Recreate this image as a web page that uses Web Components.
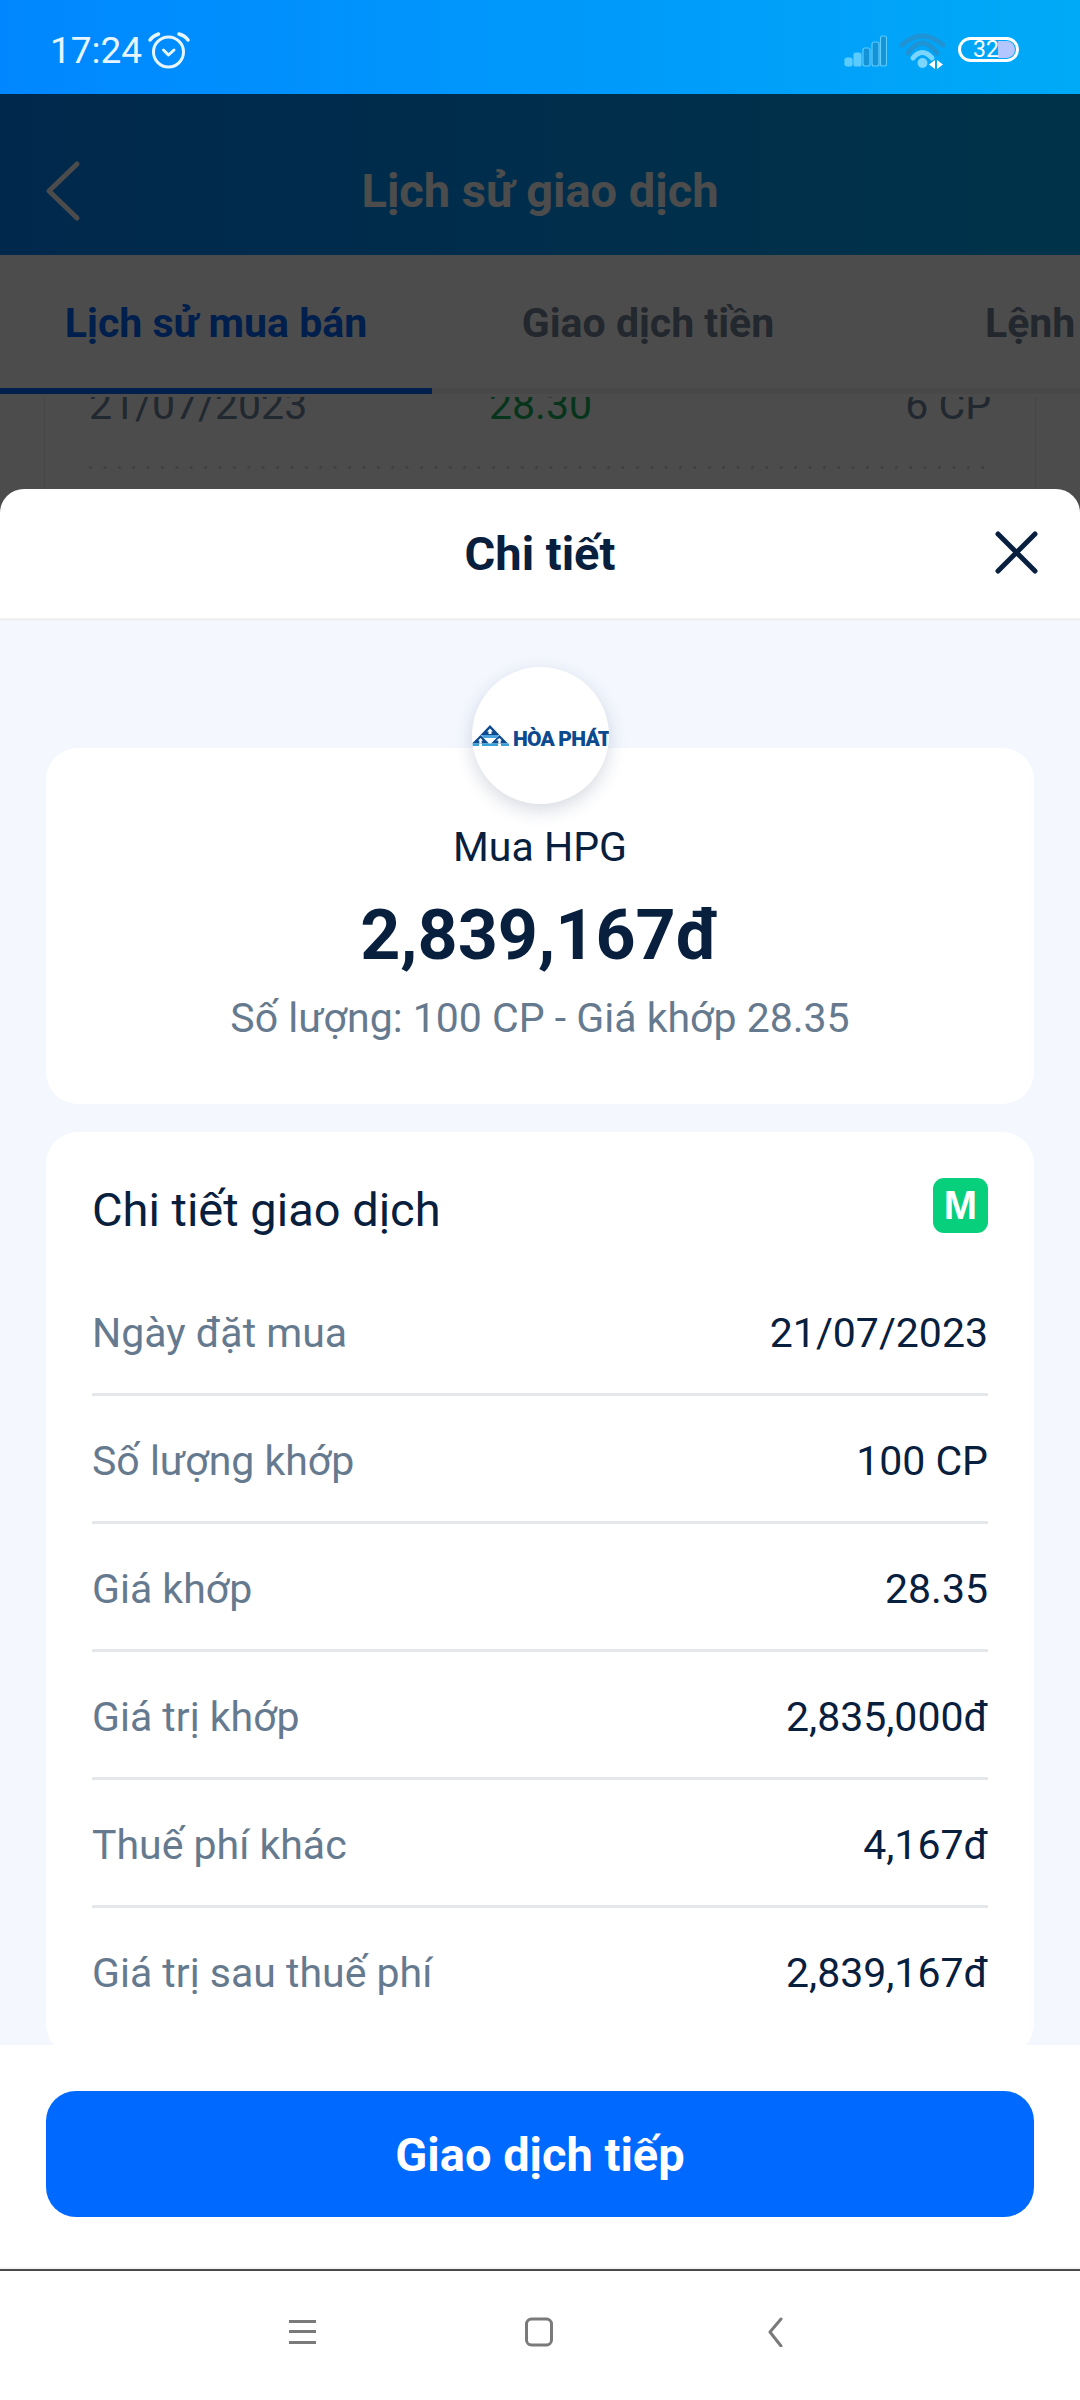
<!DOCTYPE html>
<html lang="vi">
<head>
<meta charset="utf-8">
<title>Chi tiết</title>
<style>
  html, body { margin: 0; padding: 0; background: #fff; }
  body { font-family: Roboto, "Liberation Sans", sans-serif; }
</style>
</head>
<body>
<app-screen>
  <status-bar slot="status"></status-bar>
  <app-header slot="page" data-title="Lịch sử giao dịch"></app-header>
  <tab-bar slot="page"></tab-bar>
  <history-peek slot="page"></history-peek>
  <detail-sheet slot="sheet">
    <summary-card></summary-card>
    <detail-card>
      <detail-row data-label="Ngày đặt mua" data-value="21/07/2023"></detail-row>
      <detail-row data-label="Số lượng khớp" data-value="100 CP"></detail-row>
      <detail-row data-label="Giá khớp" data-value="28.35"></detail-row>
      <detail-row data-label="Giá trị khớp" data-value="2,835,000đ"></detail-row>
      <detail-row data-label="Thuế phí khác" data-value="4,167đ"></detail-row>
      <detail-row data-label="Giá trị sau thuế phí" data-value="2,839,167đ" class="last"></detail-row>
    </detail-card>
  </detail-sheet>
  <system-nav slot="nav"></system-nav>
</app-screen>

<script>
function define(name, html, setup) {
  const template = document.createElement("template");
  template.innerHTML = html;
  customElements.define(name, class extends HTMLElement {
    constructor() {
      super();
      this.attachShadow({ mode: "open" }).append(template.content.cloneNode(true));
    }
    connectedCallback() {
      if (setup) setup(this);
    }
  });
}

define("app-screen", `
  <style>
    :host { display: flex; flex-direction: column; width: 1080px; height: 2400px; overflow: hidden; }
    .stage { position: relative; flex: 1; min-height: 0; overflow: hidden; background: #fff; }
    .scrim { position: absolute; inset: 0; background: rgba(0, 0, 0, .7); }
    .sheet { position: absolute; left: 0; right: 0; top: 395px; bottom: 0; display: flex; }
  </style>
  <slot name="status"></slot>
  <div class="stage">
    <slot name="page"></slot>
    <div class="scrim"></div>
    <div class="sheet"><slot name="sheet"></slot></div>
  </div>
  <slot name="nav"></slot>
`);

define("status-bar", `
  <style>
    :host { display: flex; align-items: center; height: 94px; box-sizing: border-box; padding: 6px 61px 0 50px; background: linear-gradient(90deg, #0087ff, #00aaf7); color: #e6f5ff; font: 400 37px Roboto, sans-serif; }
    .alarm { margin-left: 7px; display: block; margin-top: 2px; overflow: visible; }
    .right { margin-left: auto; align-self: flex-start; display: flex; align-items: flex-start; }
    .signal { margin-top: 29px; }
    .wifi { margin: 29px 0 0 12px; overflow: visible; }
    .battery { position: relative; box-sizing: border-box; width: 61px; height: 25px; margin: 31px 0 0 13px; border: 3px solid #fff; border-radius: 13px; overflow: hidden; font-size: 23px; line-height: 19px; color: #fff; padding-left: 12px; }
    .battery i { position: absolute; top: 0; bottom: 0; left: 36px; right: 0; margin: 1px; background: #b3c6ff; border-radius: 0 9px 9px 0; }
    .battery span { position: relative; }
  </style>
  <span class="time">17:24</span>
  <svg class="alarm" width="40" height="36" viewBox="0 0 40 36" fill="none" stroke="#e6f5ff" stroke-linecap="round" stroke-linejoin="round" stroke-width="3">
    <circle cx="19.5" cy="19" r="15"/>
    <path d="M14.500 17l5 5 5.500-5"/>
    <path d="M1 7c2-2.800 4.800-4.800 8.500-6M39 7c-2-2.800-4.800-4.800-9-6" stroke-width="3.500"/>
  </svg>
  <div class="right">
    <svg class="signal" width="43" height="32" viewBox="0 0 43 32">
      <g stroke="#5cccff" stroke-width="1.200">
        <rect x="1" y="23" width="7" height="8" rx="2" fill="#5cccff"/>
        <rect x="10" y="18" width="7" height="13" rx="2" fill="#5cccff"/>
        <rect x="19" y="13" width="7" height="18" rx="2" fill="#1494d6"/>
        <rect x="28" y="7" width="7" height="24" rx="2" fill="#1494d6"/>
        <rect x="36.500" y="1" width="6" height="30" rx="2" fill="#1494d6"/>
      </g>
    </svg>
    <svg class="wifi" width="46" height="36" viewBox="0 0 46 36" fill="none" stroke-linecap="round">
      <path d="M3 10Q23-8 44 10" stroke="#1f93d3" stroke-width="5"/>
      <path d="M9 18Q23-2 38 18" stroke="#1f93d3" stroke-width="5"/>
      <path d="M14 23Q23 12 33 23" stroke="#7ad6ff" stroke-width="5"/>
      <circle cx="23.500" cy="28" r="5" fill="#7ad6ff"/>
      <path d="M36 25v9l-6-4.500zM38 25v9l6-4.500z" fill="#fff"/>
    </svg>
    <div class="battery"><i></i><span>32</span></div>
  </div>
`);

define("app-header", `
  <style>
    :host { display: flex; align-items: center; justify-content: center; position: relative; height: 161px; box-sizing: border-box; padding-top: 32px; background: linear-gradient(90deg, #0087ff, #00aaf7); color: #fff; font: 700 47px Roboto, sans-serif; }
    svg { position: absolute; left: 43px; top: 66px; }
  </style>
  <svg width="40" height="62" viewBox="0 0 40 62" fill="none" stroke="#fff" stroke-width="5" stroke-linecap="round" stroke-linejoin="round"><path d="M34 4L6 31l28 27"/></svg>
  <span class="title"></span>
`, (el) => {
  el.shadowRoot.querySelector(".title").textContent = el.dataset.title;
});

define("tab-bar", `
  <style>
    :host { display: flex; height: 139px; box-sizing: border-box; background: #fff; box-shadow: inset 0 -6px #f2f2f2; font: 700 41px Roboto, sans-serif; color: #748599; overflow: hidden; white-space: nowrap; }
    .tab { flex: none; width: 432px; display: flex; align-items: flex-start; justify-content: center; padding-top: 44px; box-sizing: border-box; height: 139px; }
    .active { color: #0069ff; border-bottom: 6px solid #0069ff; }
    .more { width: auto; margin-left: 121px; }
  </style>
  <div class="tab active">Lịch sử mua bán</div>
  <div class="tab">Giao dịch tiền</div>
  <div class="tab more">Lệnh chờ khớp</div>
`);

define("history-peek", `
  <style>
    :host { display: block; height: 95px; border-top: 3px solid #fff; box-sizing: border-box; overflow: hidden; }
    .card { margin: 0 44px; border: 1px solid #e6e8ec; border-top: 0; height: 120px; box-sizing: border-box; padding: 0 44px; }
    .row { display: flex; justify-content: space-between; margin-top: -15px; font: 400 41px/46px Roboto, sans-serif; color: #71859d; position: relative; }
    .row b { font-weight: 400; color: #15b25a; position: absolute; left: 400px; }
    .dots { margin-top: 38px; height: 3px; background: radial-gradient(circle at 1.5px 1.5px, #cfd3d9 1.2px, transparent 1.6px) 0 0 / 14.400px 3px repeat-x; }
  </style>
  <div class="card">
    <div class="row"><span>21/07/2023</span><b>28.30</b><span>6 CP</span></div>
    <div class="dots"></div>
  </div>
`);

define("detail-sheet", `
  <style>
    :host { display: flex; flex-direction: column; flex: 1; min-width: 0; background: #fff; border-radius: 24px 24px 0 0; overflow: hidden; color: #08203d; font-family: Roboto, sans-serif; }
    header { position: relative; flex: none; height: 129px; display: flex; align-items: center; justify-content: center; border-bottom: 3px solid #f0f1f3; font: 700 47px Roboto, sans-serif; }
    header svg { position: absolute; left: 994px; top: 42px; }
    .body { flex: 1; min-height: 0; overflow: hidden; background: #f4f7fe; padding: 127px 46px 0; display: flex; flex-direction: column; gap: 28px; }
    footer { flex: none; height: 224px; box-sizing: border-box; padding: 46px 46px 0; border-bottom: 2px solid #f5f5f5; display: flex; flex-direction: column; }
    footer button { display: block; height: 126px; border: 0; border-radius: 30px; background: #0069ff; color: #fff; font: 700 47px Roboto, sans-serif; padding: 0; }
  </style>
  <header>
    <span>Chi tiết</span>
    <svg width="44" height="44" viewBox="0 0 44 44" fill="none" stroke="#08203d" stroke-width="5" stroke-linecap="round"><path d="M4 3l37 37M41 3L4 40"/></svg>
  </header>
  <div class="body"><slot></slot></div>
  <footer><button>Giao dịch tiếp</button></footer>
`);

define("summary-card", `
  <style>
    :host { display: block; flex: none; position: relative; height: 356px; box-sizing: border-box; background: #fff; border-radius: 32px; text-align: center; padding-top: 76px; }
    .logo { position: absolute; left: 426px; top: -81px; width: 137px; height: 137px; border-radius: 50%; background: #fff; box-shadow: 0 6px 18px rgba(30, 50, 90, .18); overflow: hidden; }
    .mark { position: absolute; left: -1px; top: 58px; }
    .brand { position: absolute; left: 41px; top: 58px; font: 900 21px/28px Roboto, sans-serif; letter-spacing: -.8px; color: #0c4a8f; white-space: nowrap; }
    .who { font: 400 41px/46px Roboto, sans-serif; color: #08203d; }
    .sum { font: 700 70px/84px Roboto, sans-serif; color: #08203d; margin-top: 23px; }
    .sub { font: 400 41px/46px Roboto, sans-serif; color: #667a8f; margin-top: 18px; }
  </style>
  <div class="logo">
    <svg class="mark" width="38" height="22" viewBox="0 0 38 22">
      <path d="M19 0l9.500 10h-19zM9.500 10l8.500 8.500H1zM28.500 10l8.500 8.500H20z" fill="#0c4a8f"/>
      <path d="M19 3.500l3 3h-1.500v2.500h-3V6.500H16zM9.500 13l2.500 2.500h-1.300v3H8.300v-3H7zM28.500 13l2.500 2.500h-1.300v3h-2.400v-3H25z" fill="#fff"/>
      <path d="M10 10h18l-2.500 3h-13z" fill="#4aa3dc"/>
      <path d="M0 18.500h8v2.500H0zM11 18.500h16v2.500H11zM30 18.500h8v2.500h-8z" fill="#3aa0d8"/>
    </svg>
    <span class="brand">HÒA PHÁT</span>
  </div>
  <div class="who">Mua HPG</div>
  <div class="sum">2,839,167đ</div>
  <div class="sub">Số lượng: 100 CP - Giá khớp 28.35</div>
`);

define("detail-card", `
  <style>
    :host { display: block; flex: none; background: #fff; border-radius: 32px; padding: 0 46px; height: 924px; box-sizing: border-box; }
    .head { height: 136px; display: flex; justify-content: space-between; align-items: flex-start; }
    .head span { font: 400 47px/54px Roboto, sans-serif; color: #08203d; margin-top: 51px; }
    .head b { margin-top: 46px; width: 55px; height: 55px; border-radius: 11px; background: #07cf7c; color: #fff; font: 700 40px/55px "Liberation Sans", sans-serif; text-align: center; }
  </style>
  <div class="head"><span>Chi tiết giao dịch</span><b>M</b></div>
  <slot></slot>
`);

define("detail-row", `
  <style>
    :host { display: flex; justify-content: space-between; align-items: center; height: 128px; box-sizing: border-box; border-bottom: 3px solid #e4e7eb; padding-top: 4px; font: 400 41px Roboto, sans-serif; color: #08203d; }
    :host(.last) { border-bottom: 0; padding-bottom: 3px; }
    .label { color: #667a8f; }
  </style>
  <span class="label"></span>
  <span class="value"></span>
`, (el) => {
  el.shadowRoot.querySelector(".label").textContent = el.dataset.label;
  el.shadowRoot.querySelector(".value").textContent = el.dataset.value;
});

define("system-nav", `
  <style>
    :host { display: flex; flex: none; position: relative; height: 131px; box-sizing: border-box; background: #fff; border-top: 2px solid #4a4a4a; }
    svg { position: absolute; top: 46px; }
  </style>
  <svg style="left:288px" width="30" height="28" viewBox="0 0 30 28" fill="#7a7a7a"><rect x="1" y="3" width="27" height="3"/><rect x="1" y="13" width="27" height="3"/><rect x="1" y="24" width="27" height="3"/></svg>
  <svg style="left:524px" width="30" height="30" viewBox="0 0 30 30" fill="none" stroke="#7a7a7a" stroke-width="3"><rect x="2.500" y="2" width="25" height="26" rx="5"/></svg>
  <svg style="left:766px" width="20" height="30" viewBox="0 0 20 30" fill="none" stroke="#7a7a7a" stroke-width="3" stroke-linecap="round" stroke-linejoin="round"><path d="M15 2L4 15l11 14"/></svg>
`);
</script>
</body>
</html>
